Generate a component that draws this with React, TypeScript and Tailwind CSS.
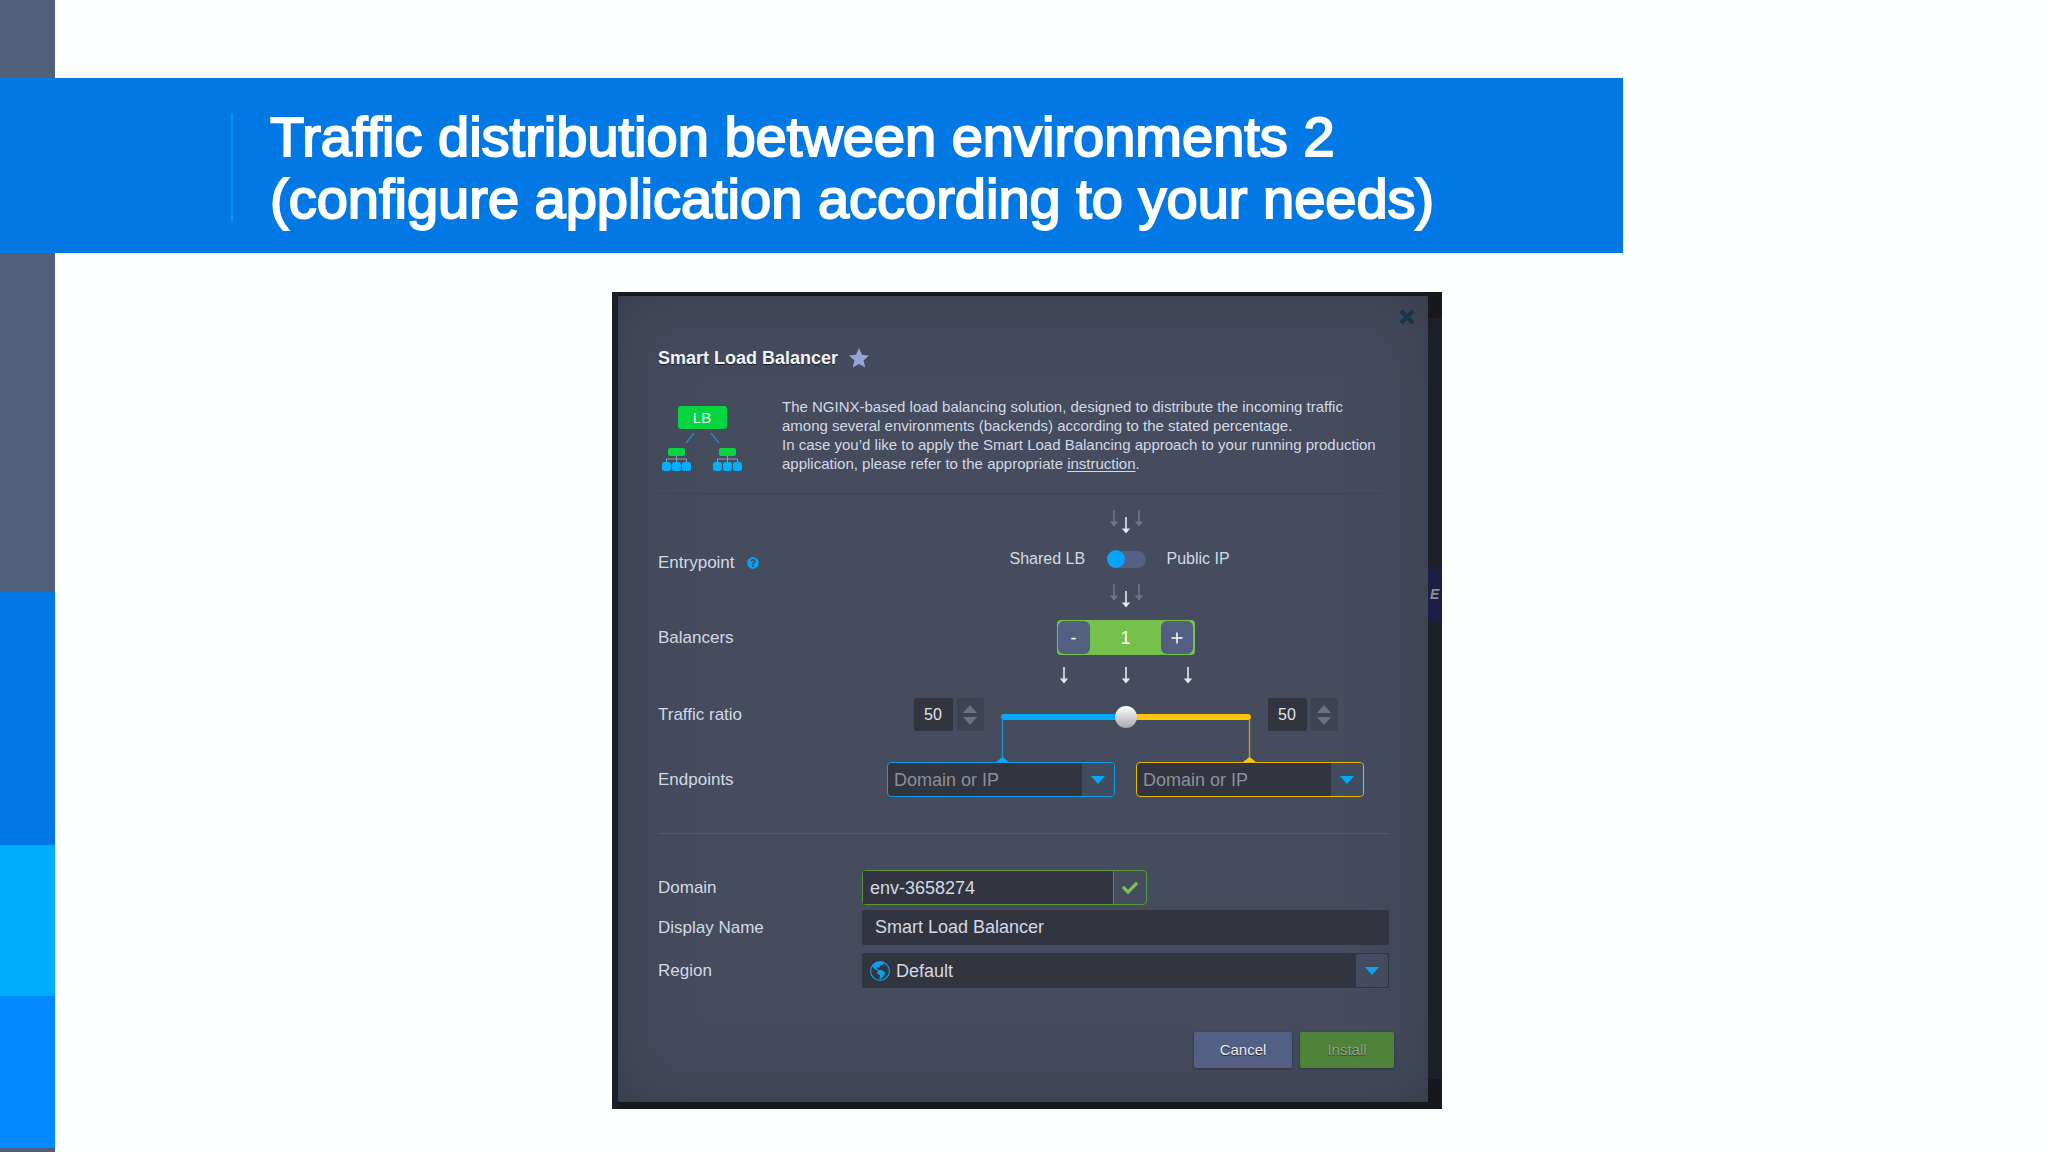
import { useState } from 'react';
import type { ReactNode } from 'react';
import { FaCheck, FaQuestionCircle } from 'react-icons/fa';
import { BsGlobeAmericas } from 'react-icons/bs';

function Triangle({ up = false, className }: { up?: boolean; className?: string }) {
  return (
    <svg viewBox="0 0 14 8" className={className} fill="currentColor" aria-hidden="true">
      <path d={up ? 'M0 8 7 0l7 8z' : 'M0 0h14L7 8z'} />
    </svg>
  );
}

function Arrow({ x, y = 0, faded = false }: { x: number; y?: number; faded?: boolean }) {
  return (
    <g transform={`translate(${x} ${y})`} fill={faded ? '#6f788a' : '#dfe6f1'}>
      <path d="M-.8 0h1.600v11.500H4.200L0 16.500l-4.200-5H-.8z" />
    </g>
  );
}

function FlowArrows() {
  return (
    <svg width="36" height="24" viewBox="0 0 36 24" aria-hidden="true">
      <Arrow x={6} faded />
      <Arrow x={18} y={7} />
      <Arrow x={31} faded />
    </svg>
  );
}

function Logo() {
  return (
    <svg width="82" height="68" viewBox="0 0 82 68" role="img" aria-label="Load balancer">
      <rect x="17" y="1" width="49" height="23" rx="3" fill="#05d63f" />
      <text x="41" y="18" fontSize="15" textAnchor="middle" fill="#e9fff0" fontFamily="Liberation Sans">
        LB
      </text>
      <path d="M33 28 25 38M50 28l8 10" stroke="#2f86b5" strokeWidth="1.500" />
      {[0, 51].map((x) => (
        <g key={x} transform={`translate(${x} 0)`}>
          <path d="M5.500 58v-4h20v4M15.500 50v8" stroke="#8f9bb0" fill="none" />
          <rect x="7" y="43" width="17" height="8" rx="2" fill="#05d63f" />
          <rect x="1" y="57" width="9" height="9" rx="2.500" fill="#05aefc" />
          <rect x="11" y="57" width="9" height="9" rx="2.500" fill="#05aefc" />
          <rect x="21" y="57" width="9" height="9" rx="2.500" fill="#05aefc" />
        </g>
      ))}
    </svg>
  );
}

function Row({ label, children }: { label: ReactNode; children: ReactNode }) {
  return (
    <div className="flex items-center">
      <div className="w-[204px] shrink-0 text-[17px]">{label}</div>
      <div className="flex flex-1 flex-col items-center">{children}</div>
    </div>
  );
}

function RatioField({
  label,
  value,
  onChange,
}: {
  label: string;
  value: number;
  onChange: (value: number) => void;
}) {
  return (
    <div className="flex h-[33px] gap-1">
      <input
        aria-label={label}
        inputMode="numeric"
        value={value}
        onChange={(e) => onChange(Number(e.target.value) || 0)}
        className="w-[39px] rounded-xs bg-[#32353f] text-center text-base text-[#dfe3ea] outline-none"
      />
      <div className="flex w-[27px] flex-col items-center justify-center gap-1 rounded-xs bg-[#3d4351] text-[#6b7180]">
        <button type="button" aria-label={`Increase ${label}`} onClick={() => onChange(value + 1)}>
          <Triangle up className="h-2 w-3.5" />
        </button>
        <button type="button" aria-label={`Decrease ${label}`} onClick={() => onChange(value - 1)}>
          <Triangle className="h-2 w-3.5" />
        </button>
      </div>
    </div>
  );
}

function EndpointField({ label, className }: { label: string; className: string }) {
  return (
    <div className={`flex h-[35px] w-[228px] rounded border bg-[#32353f] ${className}`}>
      <input
        aria-label={label}
        placeholder="Domain or IP"
        className="min-w-0 flex-1 pl-1.5 text-lg outline-none placeholder:text-[#8b8f99]"
      />
      <button
        type="button"
        aria-label={`${label} options`}
        className="flex w-8 items-center justify-center rounded-r bg-[#424c5f] text-[#05a8fb]"
      >
        <Triangle className="h-2 w-3.5" />
      </button>
    </div>
  );
}

export default function App() {
  const [ratio, setRatio] = useState(50);
  const [balancers, setBalancers] = useState(1);
  const [publicIp, setPublicIp] = useState(false);

  const changeRatio = (value: number) => setRatio(Math.min(100, Math.max(0, value)));

  return (
    <div className="grid min-h-screen grid-cols-[55px_1fr] grid-rows-[78px_175px_1fr] bg-[#fdfefe] font-['Liberation_Sans',sans-serif]">
      <div className="bg-[#50607a]" />
      <div />

      <header className="col-span-2 flex w-[79.25%] items-center bg-[#0278e4] pt-1 pl-[231px]">
        <div className="h-[107px] w-0.5 bg-[#0297f2]" />
        <h1 className="pl-[37px] text-[56px] leading-[62px] text-white [-webkit-text-stroke:2px_white]">
          Traffic distribution between environments 2
          <br />
          (configure application according to your needs)
        </h1>
      </header>

      <div className="flex flex-col">
        <div className="grow-[339] bg-[#50607a]" />
        <div className="grow-[253] bg-[#0278e6]" />
        <div className="grow-[151] bg-[#01acff]" />
        <div className="grow-[152] bg-[#0289ff]" />
        <div className="h-1 bg-[#50607a]" />
      </div>

      <main className="pt-[39px] pb-10 pl-[557px]">
        <div className="flex w-[830px] bg-[#16191d]">
          <div className="w-1.5 bg-[#1b1f27]" />

          <section className="mt-1 mb-[7px] flex-1 rounded-xs bg-[#444c5e] pb-[34px] text-[#d3d9e4] shadow-[inset_0_0_70px_#373c48]">
            <div className="flex h-[42px] items-center justify-end pr-[13px]">
              <button type="button" aria-label="Close" className="text-[#1b344a]">
                <svg className="size-4" viewBox="0 0 16 16" stroke="currentColor" strokeWidth="4.500" aria-hidden="true">
                  <path d="m2 2 12 12M14 2 2 14" />
                </svg>
              </button>
            </div>

            <div className="pr-[39px] pl-10">
              <div className="mt-2 flex h-6 items-center gap-[11px]">
                <h2 className="text-lg font-bold text-[#f1f5fb] [text-shadow:0_1px_1px_#1d2027]">Smart Load Balancer</h2>
                <svg width="20" height="20" viewBox="0 0 20 20" fill="#93a4d6" aria-hidden="true">
                  <path d="m10 0 3 6.800 7 .6-5.400 5 1.700 7.200L10 15.900l-6.300 3.700 1.700-7.200L0 7.400l7-.6z" />
                </svg>
              </div>

              <div className="mt-[27px] flex gap-[39px] pl-[3px]">
                <div className="pt-2">
                  <Logo />
                </div>
                <p className="text-[15px] leading-[19px]">
                  The NGINX-based load balancing solution, designed to distribute the incoming traffic
                  <br />
                  among several environments (backends) according to the stated percentage.
                  <br />
                  In case you’d like to apply the Smart Load Balancing approach to your running production
                  <br />
                  application, please refer to the appropriate{' '}
                  <a href="#instruction" className="underline underline-offset-2">
                    instruction
                  </a>
                  .
                </p>
              </div>

              <hr className="mt-5 border-[#3d4553]" />

              <div className="mt-4">
                <Row
                  label={
                    <span className="flex items-center gap-3 pt-2">
                      Entrypoint
                      <FaQuestionCircle className="size-3 text-[#06a3fb]" />
                    </span>
                  }
                >
                  <FlowArrows />
                  <div className="flex h-[50px] w-[304px] items-center justify-between text-base">
                    <span className="w-[112px] pl-9">Shared&nbsp;LB</span>
                    <label className="flex h-[17px] w-[39px] cursor-pointer items-center rounded-full bg-[#535f83]">
                      <input
                        type="checkbox"
                        role="switch"
                        aria-label="Use public IP"
                        checked={publicIp}
                        onChange={(e) => setPublicIp(e.target.checked)}
                        className="size-[18px] cursor-pointer appearance-none rounded-full bg-[#05a5fc] checked:ml-auto"
                      />
                    </label>
                    <span className="w-[111px]">Public&nbsp;IP</span>
                  </div>
                  <FlowArrows />
                </Row>
              </div>

              <div className="mt-3">
                <Row label="Balancers">
                  <div className="flex h-[35px] w-[138px] justify-between rounded bg-[#75c14c] p-px text-lg text-white">
                    <button
                      type="button"
                      aria-label="Remove balancer"
                      onClick={() => setBalancers(Math.max(1, balancers - 1))}
                      className="w-8 rounded-md bg-[#535f81]"
                    >
                      -
                    </button>
                    <output className="self-center">{balancers}</output>
                    <button
                      type="button"
                      aria-label="Add balancer"
                      onClick={() => setBalancers(balancers + 1)}
                      className="w-8 rounded-md bg-[#535f81]"
                    >
                      <svg viewBox="0 0 32 32" stroke="currentColor" strokeWidth="1.500" aria-hidden="true">
                        <path d="M16 10.500v11M10.500 16h11" />
                      </svg>
                    </button>
                  </div>
                </Row>
              </div>

              <div className="mt-3 flex justify-center pl-[204px]">
                <svg width="134" height="17" viewBox="0 0 134 17" aria-hidden="true">
                  <Arrow x={5} />
                  <Arrow x={67} />
                  <Arrow x={129} />
                </svg>
              </div>

              <div className="mt-3.5">
                <Row label="Traffic ratio">
                  <div className="flex items-center gap-[17px]">
                    <RatioField label="First endpoint ratio" value={ratio} onChange={changeRatio} />
                    <div className="flex pt-1">
                      <input
                        type="range"
                        aria-label="Traffic ratio"
                        value={ratio}
                        onChange={(e) => changeRatio(Number(e.target.value))}
                        className="h-[22px] w-[250px] appearance-none bg-transparent [&::-webkit-slider-runnable-track]:h-1.5 [&::-webkit-slider-runnable-track]:rounded-full [&::-webkit-slider-runnable-track]:bg-linear-to-r [&::-webkit-slider-runnable-track]:from-[#05a8fb] [&::-webkit-slider-runnable-track]:from-50% [&::-webkit-slider-runnable-track]:to-[#fdc506] [&::-webkit-slider-runnable-track]:to-50% [&::-webkit-slider-thumb]:-mt-2 [&::-webkit-slider-thumb]:size-[22px] [&::-webkit-slider-thumb]:appearance-none [&::-webkit-slider-thumb]:rounded-full [&::-webkit-slider-thumb]:bg-linear-to-b [&::-webkit-slider-thumb]:from-white [&::-webkit-slider-thumb]:to-[#a9a9ae]"
                      />
                    </div>
                    <RatioField
                      label="Second endpoint ratio"
                      value={100 - ratio}
                      onChange={(value) => changeRatio(100 - value)}
                    />
                  </div>
                </Row>
              </div>

              <div className="-mt-[11px] flex justify-center pl-[204px]">
                <svg width="250" height="42" viewBox="0 0 250 42" className="overflow-visible" aria-hidden="true">
                  <path d="M1.500 0v38" stroke="#168fcf" strokeWidth="1.500" />
                  <path d="M-5 42l6.500-5L8 42z" fill="#05a8fb" />
                  <path d="M248.500 0v38" stroke="#b99a26" strokeWidth="1.500" />
                  <path d="M242 42l6.500-5 6.500 5z" fill="#fdc506" />
                </svg>
              </div>

              <Row label="Endpoints">
                <div className="flex gap-[21px]">
                  <EndpointField label="First endpoint" className="border-[#109de8]" />
                  <EndpointField label="Second endpoint" className="border-[#e6b912]" />
                </div>
              </Row>

              <hr className="mt-9 border-[#505a6b]" />

              <div className="mt-9 flex flex-col">
                <div className="flex items-center">
                  <label htmlFor="domain" className="w-[204px] text-[17px]">
                    Domain
                  </label>
                  <div className="flex h-[35px] w-[285px] rounded border border-[#56983a]">
                    <input
                      id="domain"
                      defaultValue="env-3658274"
                      className="min-w-0 flex-1 border-r border-[#56983a] bg-[#32353f] pl-[7px] text-lg outline-none"
                    />
                    <div className="flex w-8 items-center justify-center">
                      <FaCheck className="size-4 text-[#7cc44f]" />
                    </div>
                  </div>
                </div>

                <div className="mt-[5px] flex items-center">
                  <label htmlFor="display-name" className="w-[204px] text-[17px]">
                    Display Name
                  </label>
                  <input
                    id="display-name"
                    defaultValue="Smart Load Balancer"
                    className="h-[35px] flex-1 rounded-xs bg-[#32353f] pl-[13px] text-lg outline-none"
                  />
                </div>

                <div className="mt-2 flex items-center">
                  <label htmlFor="region" className="w-[204px] text-[17px]">
                    Region
                  </label>
                  <div className="flex h-[35px] flex-1 items-center rounded-xs bg-[#32353f] py-px pr-px pl-2">
                    <BsGlobeAmericas className="size-5 text-[#0ba0ee]" />
                    <select id="region" className="flex-1 appearance-none pl-1.5 text-lg outline-none">
                      <option>Default</option>
                    </select>
                    <span className="flex h-full w-8 items-center justify-center rounded-xs bg-[#424c5e] text-[#0ba4f5]">
                      <Triangle className="h-2 w-3.5" />
                    </span>
                  </div>
                </div>
              </div>
            </div>

            <div className="mt-11 flex justify-end gap-2 pr-[34px] text-[15px]">
              <button
                type="button"
                className="h-9 w-[98px] rounded-xs bg-[#535f84] text-[#e6eaf3] shadow-[0_1px_3px_#2d323d] [text-shadow:0_1px_1px_#23262e]"
              >
                Cancel
              </button>
              <button
                type="button"
                disabled
                className="h-9 w-[94px] rounded-xs bg-[#50833a] text-[#8fa588] shadow-[0_1px_3px_#2d323d] [text-shadow:0_1px_1px_#2c4023]"
              >
                Install
              </button>
            </div>
          </section>

          <div className="flex w-3.5 flex-col">
            <div className="h-[26px] bg-[#16181b]" />
            <div className="h-[249px] bg-[#1d2125]" />
            <div className="flex h-[54px] items-center bg-[#1b1f45] pl-0.5 text-sm font-bold text-[#8b8d97] italic" aria-hidden="true">
              E
            </div>
            <div className="flex-1 bg-[#1c2127]" />
            <div className="h-[30px] bg-[#16181b]" />
          </div>
        </div>
      </main>
    </div>
  );
}
